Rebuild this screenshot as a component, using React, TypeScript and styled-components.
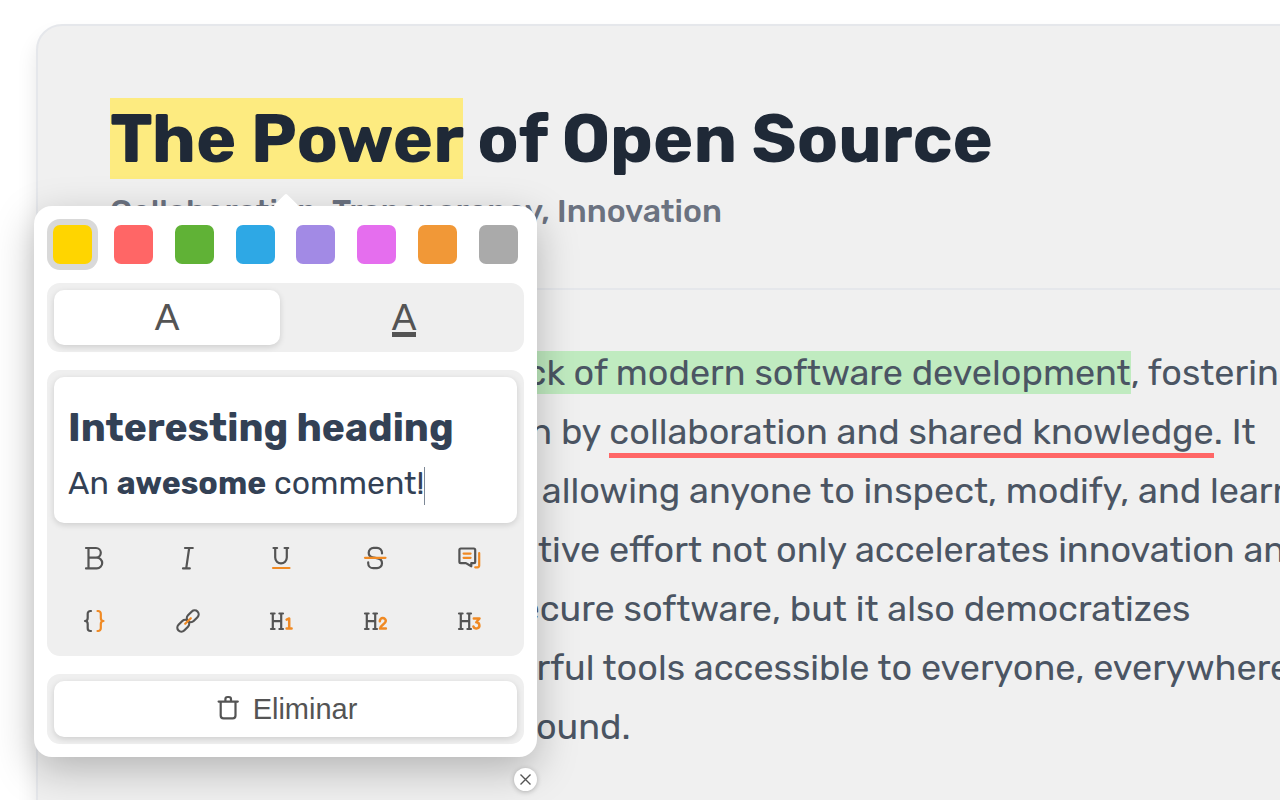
import React, { useState } from "react";
import styled, { createGlobalStyle, css } from "styled-components";

const ink = "#545454";
const accent = "#f08a24";

const GlobalStyle = createGlobalStyle`
  *, *::before, *::after { box-sizing: border-box; }
  body {
    margin: 0;
    background: #ffffff;
    font-family: Rubik, Inter, "Open Sans", sans-serif;
  }
  h1, h2, p { margin: 0; }
  button { font: inherit; color: inherit; cursor: pointer; }
`;

const Page = styled.div`
  position: relative;
  min-height: 100vh;
  display: flex;
  flex-direction: column;
  padding: 24px 0 0 36px;
  overflow: hidden;
`;

const Article = styled.article`
  flex: 1;
  margin: 0 -40px -40px 0;
  padding: 72px 0 72px 72px;
  border: 2px solid #e5e7eb;
  border-radius: 26px;
  background: #f0f0f0;
  box-shadow: 0 13px 20px rgba(0, 0, 0, 0.1);
  white-space: nowrap;
`;

const ArticleHeader = styled.header`
  padding-bottom: 57px;
  border-bottom: 2px solid #e5e7eb;
`;

const Title = styled.h1`
  color: #1f2937;
  font-size: 68px;
  font-weight: 700;
  line-height: 81px;
`;

const Subtitle = styled.p`
  margin-top: 12px;
  color: #6b7280;
  font-size: 32px;
  font-weight: 500;
  line-height: 40px;
`;

const Body = styled.p`
  padding-top: 53px;
  color: #4b5563;
  font-size: 36px;
  line-height: 59px;
`;

const Line = styled.span`
  display: block;
`;

const Highlight = styled.mark<{ $color: string }>`
  color: inherit;
  background: ${(p) => p.$color};
`;

const Underlined = styled.mark`
  color: inherit;
  background: none;
  border-bottom: 5px solid #ff6666;
`;

const Popup = styled.section`
  position: absolute;
  top: 206px;
  left: 34px;
  width: 503px;
  padding: 13px;
  display: flex;
  flex-direction: column;
  gap: 18px;
  border-radius: 18px;
  background: #ffffff;
  box-shadow: 0 13px 40px rgba(0, 0, 0, 0.25);
  color: ${ink};

  &::before {
    content: "";
    position: absolute;
    top: -9px;
    left: calc(50% - 9px);
    width: 18px;
    height: 18px;
    border-radius: 2px;
    background: #ffffff;
    transform: rotate(45deg);
  }
`;

const StyleControls = styled.div`
  display: flex;
  flex-direction: column;
  gap: 13px;
`;

const Swatches = styled.fieldset`
  display: flex;
  justify-content: space-between;
  min-width: 0;
  margin: 0;
  padding: 0;
  border: 0;
`;

const Swatch = styled.input<{ $color: string }>`
  appearance: none;
  width: 39px;
  height: 39px;
  margin: 6px;
  border-radius: 7px;
  background: ${(p) => p.$color};
  cursor: pointer;

  &:checked {
    box-shadow: 0 0 0 6px #d9d9d9;
  }
`;

const Tray = styled.div`
  padding: 7px;
  border-radius: 13px;
  background: #efefef;
`;

const raised = css`
  border-radius: 10px;
  background: #ffffff;
  box-shadow: 0 2px 6px rgba(0, 0, 0, 0.14);
`;

const ModeSwitch = styled(Tray)`
  display: grid;
  grid-template-columns: 1fr 1fr;
  gap: 11px;
`;

const ModeButton = styled.button<{ $active: boolean }>`
  height: 55px;
  padding: 0;
  border: 0;
  border-radius: 10px;
  background: none;
  font-family: "Liberation Sans", Arial, sans-serif;
  font-size: 37px;
  line-height: 40px;
  ${(p) => p.$active && raised}
`;

const UnderlineGlyph = styled.span`
  display: inline-block;
  height: 39px;
  border-bottom: 5px solid ${ink};
`;

const Editor = styled.div`
  ${raised}
  padding: 27px 14px 18px;
  color: #334155;
  outline: none;
`;

const NoteHeading = styled.h2`
  font-size: 39px;
  font-weight: 700;
  line-height: 48px;
`;

const NoteText = styled.p`
  margin-top: 10px;
  font-size: 32px;
  line-height: 43px;
`;

const Caret = styled.span`
  display: inline-block;
  width: 1px;
  height: 38px;
  vertical-align: middle;
  background: #7d8896;
`;

const Toolbar = styled.div`
  display: grid;
  grid-template-columns: repeat(5, 1fr);
  margin: 3px 1px -3px -7px;
`;

const ToolButton = styled.button`
  display: flex;
  align-items: center;
  justify-content: center;
  height: 63px;
  padding: 0;
  border: 0;
  background: none;
`;

const ToolIcon = styled.svg.attrs({ width: 28, height: 28, viewBox: "0 0 28 28" })`
  fill: none;
  stroke: ${ink};
  stroke-width: 2.2;
  stroke-linecap: round;
  stroke-linejoin: round;

  .accent { stroke: ${accent}; }
  .digit { stroke: ${accent}; stroke-width: 2.5; }
`;

const DeleteButton = styled.button`
  ${raised}
  display: flex;
  align-items: center;
  justify-content: center;
  gap: 11px;
  width: 100%;
  height: 56px;
  padding: 0;
  border: 0;
  font-family: "Liberation Sans", Arial, sans-serif;
  font-size: 29px;
`;

const CloseButton = styled.button`
  position: absolute;
  top: calc(100% + 11px);
  right: 0;
  display: flex;
  align-items: center;
  justify-content: center;
  width: 23px;
  height: 23px;
  padding: 0;
  border: 0;
  border-radius: 50%;
  background: #ffffff;
  box-shadow: 0 1px 5px rgba(0, 0, 0, 0.25);
`;

const colors = [
  { name: "Amarillo", value: "#ffd500" },
  { name: "Rojo", value: "#ff6666" },
  { name: "Verde", value: "#60b236" },
  { name: "Azul", value: "#2ea8e5" },
  { name: "Morado", value: "#a28ae5" },
  { name: "Magenta", value: "#e56eee" },
  { name: "Naranja", value: "#f19837" },
  { name: "Gris", value: "#aaaaaa" },
];

const headingLetter = (
  <path d="M4 6.500h3.600M4 22h3.600M12.400 6.500H16M12.400 22H16M5.800 6.500V22M14.200 6.500V22M5.800 14.200h8.400" />
);

const tools = [
  {
    label: "Negrita",
    art: <path d="M6 4h10a4.8 4.8 0 0 1 0 9.6H8.5M16 13.6h.8a5.4 5.4 0 0 1 0 10.8H6M8.5 4v20.4" />,
  },
  { label: "Cursiva", art: <path d="M11 4h7.8M9 24.4h6.800M15.200 4l-3 20.400" /> },
  {
    label: "Subrayado",
    art: (
      <>
        <path d="M6.500 4h3.600M17.600 4h3.600M8.200 4v9.600a5.800 5.800 0 0 0 11.600 0V4" />
        <path className="accent" d="M6 24h16.500" />
      </>
    ),
  },
  {
    label: "Tachado",
    art: (
      <>
        <path d="M21 9.400V8.800A5 5 0 0 0 16 3.800h-3.400a4.900 4.900 0 0 0-4.900 4.900c0 2.600 1.600 4 3.700 4.500l5.400 1.200c2.400.6 4.200 2 4.200 4.800a5 5 0 0 1-5 5h-3.800a5 5 0 0 1-5-5v-.8" />
        <path className="accent" d="M4 13.800h20.500" />
      </>
    ),
  },
  {
    label: "Cita",
    art: (
      <>
        <path d="M5.800 4.500h13a1.400 1.400 0 0 1 1.400 1.400v11.800a1.400 1.400 0 0 1-1.400 1.400h-2.500v3.200l-5.400-3.200H5.800a1.400 1.400 0 0 1-1.400-1.400V5.900a1.400 1.400 0 0 1 1.400-1.400z" />
        <path className="accent" d="M8.600 9.600h7M8.600 13.800h7M24.200 9v12.600a1.700 1.700 0 0 1-1.700 1.700H20.200" />
      </>
    ),
  },
  {
    label: "Código",
    art: (
      <>
        <path d="M11 4h-.6a2.700 2.700 0 0 0-2.700 2.700v4.300c0 2-.8 3-2.700 3 1.900 0 2.700 1 2.700 3v4.300a2.700 2.700 0 0 0 2.700 2.700H11" />
        <path className="accent" d="M17.500 4h.6a2.700 2.700 0 0 1 2.700 2.700v4.300c0 2 .8 3 2.700 3-1.900 0-2.700 1-2.700 3v4.300a2.700 2.700 0 0 1-2.700 2.700h-.6" />
      </>
    ),
  },
  {
    label: "Enlace",
    art: (
      <g transform="rotate(-45 14 14)">
        <rect x="0.6" y="10" width="13.4" height="8" rx="4" />
        <rect x="14" y="10" width="13.4" height="8" rx="4" />
        <path className="accent" d="M10 14h8" />
      </g>
    ),
  },
  {
    label: "Título 1",
    art: (
      <>
        {headingLetter}
        <path className="digit" d="M19.600 12.600l2.600-1.100v10M19.600 21.500h5" />
      </>
    ),
  },
  {
    label: "Título 2",
    art: (
      <>
        {headingLetter}
        <path className="digit" d="M18.800 14.200a3 3 0 0 1 6-.2c0 2.600-5.600 4.400-5.800 7.500h5.900" />
      </>
    ),
  },
  {
    label: "Título 3",
    art: (
      <>
        {headingLetter}
        <path className="digit" d="M18.800 11.500h5.700l-3.200 3.800a3.100 3.100 0 1 1-2.900 4.200" />
      </>
    ),
  },
];

export default function App() {
  const [color, setColor] = useState("Amarillo");
  const [mode, setMode] = useState("highlight");

  return (
    <>
      <GlobalStyle />
      <Page>
        <Article>
          <ArticleHeader>
            <Title>
              <Highlight $color="#fdeb80">The Power</Highlight> of Open Source
            </Title>
            <Subtitle>Collaboration, Transparency, Innovation</Subtitle>
          </ArticleHeader>
          <Body>
            <Line>
              Open source is the <Highlight $color="#c0ebc0">bedrock of modern software development</Highlight>, fostering
            </Line>
            <Line>
              a global community driven by <Underlined>collaboration and shared knowledge</Underlined>. It
            </Line>
            <Line>champions transparency, allowing anyone to inspect, modify, and learn</Line>
            <Line>from the code. This collective effort not only accelerates innovation and</Line>
            <Line>and thus leads to more secure software, but it also democratizes</Line>
            <Line>technology, making powerful tools accessible to everyone, everywhere</Line>
            <Line>yet all across the world around.</Line>
          </Body>
        </Article>

        <Popup aria-label="Editar resaltado">
          <StyleControls>
            <Swatches aria-label="Color">
              {colors.map((c) => (
                <Swatch
                  key={c.name}
                  type="radio"
                  name="color"
                  aria-label={c.name}
                  $color={c.value}
                  checked={color === c.name}
                  onChange={() => setColor(c.name)}
                />
              ))}
            </Swatches>
            <ModeSwitch>
              <ModeButton
                aria-pressed={mode === "highlight"}
                $active={mode === "highlight"}
                onClick={() => setMode("highlight")}
              >
                A
              </ModeButton>
              <ModeButton
                aria-pressed={mode === "underline"}
                $active={mode === "underline"}
                onClick={() => setMode("underline")}
              >
                <UnderlineGlyph>A</UnderlineGlyph>
              </ModeButton>
            </ModeSwitch>
          </StyleControls>

          <Tray>
            <Editor role="textbox" aria-multiline="true" aria-label="Comentario" tabIndex={0}>
              <NoteHeading>Interesting heading</NoteHeading>
              <NoteText>
                An <b>awesome</b> comment!<Caret />
              </NoteText>
            </Editor>
            <Toolbar>
              {tools.map((t) => (
                <ToolButton key={t.label} aria-label={t.label}>
                  <ToolIcon aria-hidden="true">{t.art}</ToolIcon>
                </ToolButton>
              ))}
            </Toolbar>
          </Tray>

          <Tray>
            <DeleteButton>
              <ToolIcon aria-hidden="true">
                <path d="M4.600 6.600h19.200M6.700 6.600v14a2.800 2.800 0 0 0 2.800 2.800h9.200a2.800 2.800 0 0 0 2.800-2.800V6.600M11.400 6.500V4.200a2.200 2.200 0 0 1 2.200-2.200h1.200a2.200 2.200 0 0 1 2.200 2.200v2.300" />
              </ToolIcon>
              Eliminar
            </DeleteButton>
          </Tray>

          <CloseButton aria-label="Cerrar">
            <svg width="11" height="11" viewBox="0 0 11 11" stroke={ink} strokeWidth="1.4" aria-hidden="true">
              <path d="M0.5 0.5l10 10M10.5 0.5l-10 10" />
            </svg>
          </CloseButton>
        </Popup>
      </Page>
    </>
  );
}
